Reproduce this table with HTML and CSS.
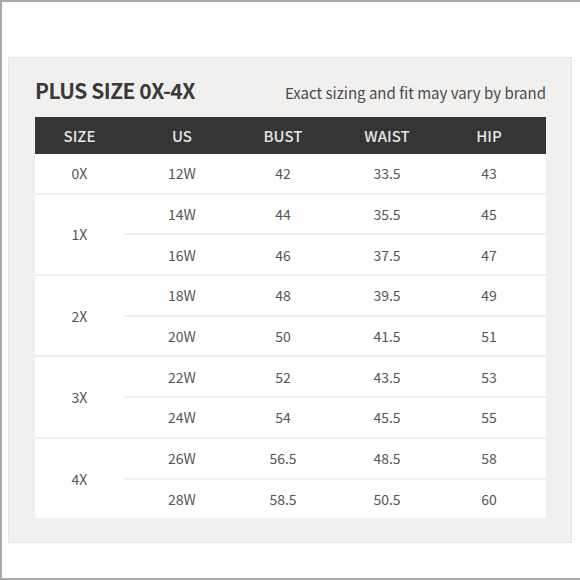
FILE: index.html
```html
<!DOCTYPE html>
<html>
<head>
<meta charset="utf-8">
<link rel="stylesheet" href="styles.css">
</head>
<body>
<div class="frame">
  <div class="card">
    <div class="titlebar">
      <h1 class="title">PLUS SIZE 0X-4X</h1>
      <p class="note">Exact sizing and fit may vary by brand</p>
    </div>
    <div class="table">
      <div class="head">
        <div class="c">SIZE</div>
        <div class="c">US</div>
        <div class="c">BUST</div>
        <div class="c">WAIST</div>
        <div class="c last">HIP</div>
      </div>
      <div class="group">
        <div class="size">0X</div>
        <div class="subs">
          <div class="sub"><div class="c">12W</div><div class="c">42</div><div class="c">33.5</div><div class="c last">43</div></div>
        </div>
      </div>
      <div class="group">
        <div class="size">1X</div>
        <div class="subs">
          <div class="sub"><div class="c">14W</div><div class="c">44</div><div class="c">35.5</div><div class="c last">45</div></div>
          <div class="sub"><div class="c">16W</div><div class="c">46</div><div class="c">37.5</div><div class="c last">47</div></div>
        </div>
      </div>
      <div class="group">
        <div class="size">2X</div>
        <div class="subs">
          <div class="sub"><div class="c">18W</div><div class="c">48</div><div class="c">39.5</div><div class="c last">49</div></div>
          <div class="sub"><div class="c">20W</div><div class="c">50</div><div class="c">41.5</div><div class="c last">51</div></div>
        </div>
      </div>
      <div class="group">
        <div class="size">3X</div>
        <div class="subs">
          <div class="sub"><div class="c">22W</div><div class="c">52</div><div class="c">43.5</div><div class="c last">53</div></div>
          <div class="sub"><div class="c">24W</div><div class="c">54</div><div class="c">45.5</div><div class="c last">55</div></div>
        </div>
      </div>
      <div class="group">
        <div class="size">4X</div>
        <div class="subs">
          <div class="sub"><div class="c">26W</div><div class="c">56.5</div><div class="c">48.5</div><div class="c last">58</div></div>
          <div class="sub"><div class="c">28W</div><div class="c">58.5</div><div class="c">50.5</div><div class="c last">60</div></div>
        </div>
      </div>
    </div>
  </div>
</div>
</body>
</html>
```
FILE: styles.css
```css
html, body {
  margin: 0;
  padding: 0;
  background: #ffffff;
}
body {
  font-family: "Noto Sans CJK SC", "Noto Sans", sans-serif;
  color: #555555;
}
.frame {
  width: 580px;
  height: 580px;
  box-sizing: border-box;
  border-top: 2px solid #a8a8a8;
  border-left: 2px solid #a8a8a8;
  border-bottom: 2px solid #a8a8a8;
  padding: 55px 0 0 6px;
}
.card {
  width: 564px;
  height: 486px;
  box-sizing: border-box;
  background: #f2f0ef;
  border: 1px solid #e6e4e3;
  padding: 17px 25px 0 26px;
}
.titlebar {
  display: flex;
  justify-content: space-between;
  align-items: baseline;
  height: 30px;
  margin-bottom: 12px;
}
.title {
  margin: 0;
  font-size: 21px;
  font-weight: 700;
  letter-spacing: -0.5px;
  color: #3a3a3a;
  line-height: 30px;
}
.note {
  margin: 0;
  font-size: 15px;
  line-height: 30px;
  color: #4a4a4a;
}
.table {
  display: flex;
  flex-direction: column;
  gap: 2px;
}
.head {
  display: grid;
  grid-template-columns: 89px 116px 86px 122px 82px;
  padding-right: 16px;
  height: 37px;
  align-items: center;
  background: #353535;
  color: #e6e6e6;
  font-size: 15px;
  font-weight: 500;
  margin-bottom: -2px;
}
.c {
  text-align: center;
}
.group {
  display: flex;
  background: #ffffff;
}
.size {
  width: 89px;
  display: flex;
  align-items: center;
  justify-content: center;
  font-size: 14px;
}
.subs {
  flex: 1;
  display: flex;
  flex-direction: column;
  gap: 2px;
  background: #f1efee;
}
.sub {
  display: grid;
  grid-template-columns: 116px 86px 122px 82px;
  padding-right: 16px;
  height: 38.7px;
  align-items: center;
  background: #ffffff;
  font-size: 14px;
}
```
